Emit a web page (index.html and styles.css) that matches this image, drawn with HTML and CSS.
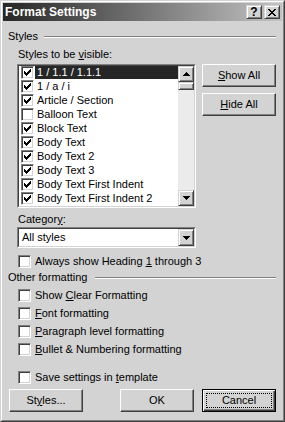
FILE: index.html
```html
<!DOCTYPE html>
<html>
<head>
<meta charset="utf-8">
<link rel="stylesheet" href="styles.css">
</head>
<body>
<div class="window">
 <div class="frame">
  <div class="titlebar">
   <span class="title">Format Settings</span>
   <div class="tbtns">
    <span class="tbtn help">?</span>
    <span class="tbtn"><svg width="8" height="7" viewBox="0 0 8 7" shape-rendering="crispEdges"><path d="M0 0h2v1h-2zM6 0h2v1h-2zM1 1h2v1h-2zM5 1h2v1h-2zM2 2h4v1h-4zM3 3h2v1h-2zM2 4h4v1h-4zM1 5h2v1h-2zM5 5h2v1h-2zM0 6h2v1h-2zM6 6h2v1h-2z" fill="#000"/></svg></span>
   </div>
  </div>
  <div class="client">
   <div class="group g1"><span>Styles</span><div class="rule"></div></div>
   <div class="indent">
    <div class="lbl">Styles to be <u>v</u>isible:</div>
    <div class="listrow">
     <div class="listbox sunken">
      <div class="sunken-in">
       <div class="items">
        <div class="item sel"><span class="cb"><svg class="ck" width="7" height="7" viewBox="0 0 7 7" shape-rendering="crispEdges"><path d="M0 2H1V3H2V4H3V3H4V2H5V1H6V0H7V3H6V4H5V5H4V6H3V7H2V6H1V5H0Z"/></svg></span><span class="txt">1 / 1.1 / 1.1.1</span></div>
        <div class="item"><span class="cb"><svg class="ck" width="7" height="7" viewBox="0 0 7 7" shape-rendering="crispEdges"><path d="M0 2H1V3H2V4H3V3H4V2H5V1H6V0H7V3H6V4H5V5H4V6H3V7H2V6H1V5H0Z"/></svg></span><span class="txt">1 / a / i</span></div>
        <div class="item"><span class="cb"><svg class="ck" width="7" height="7" viewBox="0 0 7 7" shape-rendering="crispEdges"><path d="M0 2H1V3H2V4H3V3H4V2H5V1H6V0H7V3H6V4H5V5H4V6H3V7H2V6H1V5H0Z"/></svg></span><span class="txt">Article / Section</span></div>
        <div class="item"><span class="cb"></span><span class="txt">Balloon Text</span></div>
        <div class="item"><span class="cb"><svg class="ck" width="7" height="7" viewBox="0 0 7 7" shape-rendering="crispEdges"><path d="M0 2H1V3H2V4H3V3H4V2H5V1H6V0H7V3H6V4H5V5H4V6H3V7H2V6H1V5H0Z"/></svg></span><span class="txt">Block Text</span></div>
        <div class="item"><span class="cb"><svg class="ck" width="7" height="7" viewBox="0 0 7 7" shape-rendering="crispEdges"><path d="M0 2H1V3H2V4H3V3H4V2H5V1H6V0H7V3H6V4H5V5H4V6H3V7H2V6H1V5H0Z"/></svg></span><span class="txt">Body Text</span></div>
        <div class="item"><span class="cb"><svg class="ck" width="7" height="7" viewBox="0 0 7 7" shape-rendering="crispEdges"><path d="M0 2H1V3H2V4H3V3H4V2H5V1H6V0H7V3H6V4H5V5H4V6H3V7H2V6H1V5H0Z"/></svg></span><span class="txt">Body Text 2</span></div>
        <div class="item"><span class="cb"><svg class="ck" width="7" height="7" viewBox="0 0 7 7" shape-rendering="crispEdges"><path d="M0 2H1V3H2V4H3V3H4V2H5V1H6V0H7V3H6V4H5V5H4V6H3V7H2V6H1V5H0Z"/></svg></span><span class="txt">Body Text 3</span></div>
        <div class="item"><span class="cb"><svg class="ck" width="7" height="7" viewBox="0 0 7 7" shape-rendering="crispEdges"><path d="M0 2H1V3H2V4H3V3H4V2H5V1H6V0H7V3H6V4H5V5H4V6H3V7H2V6H1V5H0Z"/></svg></span><span class="txt">Body Text First Indent</span></div>
        <div class="item"><span class="cb"><svg class="ck" width="7" height="7" viewBox="0 0 7 7" shape-rendering="crispEdges"><path d="M0 2H1V3H2V4H3V3H4V2H5V1H6V0H7V3H6V4H5V5H4V6H3V7H2V6H1V5H0Z"/></svg></span><span class="txt">Body Text First Indent 2</span></div>
       </div>
       <div class="vscroll">
        <div class="sbtn"><svg width="7" height="4" viewBox="0 0 7 4" shape-rendering="crispEdges"><path d="M3 0h1v1h1v1h1v1h1v1H0V3h1V2h1V1h1z"/></svg></div>
        <div class="thumb"></div>
        <div class="track"></div>
        <div class="sbtn"><svg width="7" height="4" viewBox="0 0 7 4" shape-rendering="crispEdges"><path d="M0 0h7v1H6v1H5v1H4v1H3V3H2V2H1V1H0z"/></svg></div>
       </div>
      </div>
     </div>
     <div class="side">
      <div class="btn"><span><u>S</u>how All</span></div>
      <div class="btn"><span><u>H</u>ide All</span></div>
     </div>
    </div>
    <div class="lbl cat">Categor<u>y</u>:</div>
    <div class="combo sunken">
     <div class="sunken-in">
      <span class="combo-text">All styles</span>
      <div class="sbtn cbtn"><svg width="7" height="4" viewBox="0 0 7 4" shape-rendering="crispEdges"><path d="M0 0h7v1H6v1H5v1H4v1H3V3H2V2H1V1H0z"/></svg></div>
     </div>
    </div>
    <div class="chk chk1"><span class="cb"></span><span>Always show Heading <u>1</u> through 3</span></div>
   </div>
   <div class="group g2"><span>Other formatting</span><div class="rule"></div></div>
   <div class="indent checks">
    <div class="chk"><span class="cb"></span><span>Show <u>C</u>lear Formatting</span></div>
    <div class="chk"><span class="cb"></span><span><u>F</u>ont formatting</span></div>
    <div class="chk"><span class="cb"></span><span><u>P</u>aragraph level formatting</span></div>
    <div class="chk"><span class="cb"></span><span><u>B</u>ullet &amp; Numbering formatting</span></div>
    <div class="chk save"><span class="cb"></span><span>Save settings in <u>t</u>emplate</span></div>
   </div>
   <div class="bottom">
    <div class="btn b-styles"><span>St<u>y</u>les...</span></div>
    <div class="btn b-ok"><span>OK</span></div>
    <div class="btn def b-cancel"><span class="focus">Cancel</span></div>
   </div>
  </div>
 </div>
</div>
</body>
</html>
```
FILE: styles.css
```css
html, body {
  margin: 0;
  padding: 0;
  background: #d3d3d3;
}
body {
  font-family: "Liberation Sans", Arial, sans-serif;
  font-size: 11px;
  color: #000;
}
u { text-decoration: underline; text-underline-offset: 1px; }

.window {
  width: 285px;
  height: 422px;
  box-sizing: border-box;
  border: 1px solid;
  border-color: #d3d3d3 #404040 #404040 #d3d3d3;
  background: #d3d3d3;
}
.frame {
  height: 100%;
  box-sizing: border-box;
  border: 1px solid;
  border-color: #fff #808080 #808080 #fff;
  padding: 1px;
  display: flex;
  flex-direction: column;
}
.titlebar {
  height: 18px;
  flex: none;
  background: linear-gradient(to right, #262626, #c3c3c3);
  display: flex;
  align-items: center;
  padding: 0 2px 0 2px;
}
.title {
  flex: 1;
  color: #fff;
  font-weight: bold;
  font-size: 12px;
  line-height: 18px;
}
.tbtns { display: flex; gap: 2px; }
.tbtn {
  width: 16px;
  height: 14px;
  box-sizing: border-box;
  border: 1px solid;
  border-color: #d3d3d3 #404040 #404040 #d3d3d3;
  box-shadow: inset 1px 1px #fff, inset -1px -1px #808080;
  background: #d3d3d3;
  display: flex;
  align-items: center;
  justify-content: center;
}
.help {
  font-weight: bold;
  font-size: 12px;
  line-height: 12px;
}

.client {
  flex: 1;
  padding: 0 6px 0 5px;
  display: flex;
  flex-direction: column;
}
.group {
  display: flex;
  align-items: center;
  height: 13px;
  line-height: 13px;
}
.group .rule {
  flex: 1;
  margin-left: 6px;
  border-top: 1px solid #808080;
  border-bottom: 1px solid #fff;
}
.g1 { margin-top: 9px; }
.g2 { margin-top: 3px; }
.g2 .rule { margin-left: 8px; }

.indent { margin-left: 9px; }
.lbl {
  margin-top: 5px;
  line-height: 13px;
  height: 13px;
  padding-left: 1px;
}
.listrow {
  display: flex;
  align-items: flex-start;
  margin-top: 3px;
}
.sunken {
  box-sizing: border-box;
  border: 1px solid;
  border-color: #808080 #fff #fff #808080;
}
.sunken-in {
  box-sizing: border-box;
  height: 100%;
  border: 1px solid;
  border-color: #404040 #d3d3d3 #d3d3d3 #404040;
  background: #fff;
  display: flex;
}
.listbox { width: 179px; height: 144px; }
.items { flex: 1; overflow: hidden; }
.item {
  height: 14px;
  display: flex;
  align-items: flex-start;
}
.item .cb { margin-left: 2px; }
.item .txt {
  margin-left: 1px;
  padding-left: 2px;
  height: 13px;
  line-height: 13px;
  white-space: nowrap;
}
.item.sel .txt {
  flex: 1;
  background: #262626;
  color: #fff;
}

.cb {
  flex: none;
  width: 13px;
  height: 13px;
  box-sizing: border-box;
  border: 1px solid;
  border-color: #808080 #fff #fff #808080;
  box-shadow: inset 1px 1px #404040, inset -1px -1px #d3d3d3;
  background: #fff;
  padding: 2px;
  display: flex;
}
.ck { display: block; fill: #000; }

.vscroll {
  width: 16px;
  flex: none;
  display: flex;
  flex-direction: column;
  background: #ebebeb;
}
.sbtn, .thumb {
  flex: none;
  width: 16px;
  box-sizing: border-box;
  border: 1px solid;
  border-color: #d3d3d3 #404040 #404040 #d3d3d3;
  box-shadow: inset 1px 1px #fff, inset -1px -1px #808080;
  background: #d3d3d3;
}
.sbtn {
  height: 16px;
  display: flex;
  align-items: center;
  justify-content: center;
}
.sbtn svg { fill: #000; display: block; }
.thumb { height: 8px; }
.track { flex: 1; }

.side {
  margin-left: 6px;
  display: flex;
  flex-direction: column;
  gap: 6px;
}
.btn {
  width: 74px;
  height: 23px;
  box-sizing: border-box;
  border: 1px solid;
  border-color: #fff #404040 #404040 #fff;
  box-shadow: inset -1px -1px #808080;
  background: #d3d3d3;
  display: flex;
  align-items: center;
  justify-content: center;
  line-height: 13px;
}

.cat { margin-top: 5px; }
.combo {
  margin-top: 1px;
  width: 179px;
  height: 21px;
}
.combo-text {
  flex: 1;
  padding-left: 3px;
  line-height: 17px;
}
.cbtn { height: 17px; }

.chk {
  display: flex;
  align-items: flex-start;
  height: 13px;
  line-height: 13px;
  white-space: nowrap;
}
.chk .cb { margin-left: 1px; margin-right: 4px; }
.chk1 { margin-top: 7px; }
.checks .chk { margin-top: 5px; }
.checks .save { margin-top: 15px; }

.bottom {
  margin-top: 5px;
  display: flex;
}
.b-styles { margin-left: 1px; }
.b-ok { margin-left: 37px; }
.b-cancel { margin-left: 8px; }
.btn.def {
  border: 1px solid #000;
  box-shadow: inset 1px 1px #fff, inset -1px -1px #404040, inset -2px -2px #808080;
  padding: 3px;
  align-items: stretch;
}
.focus {
  flex: 1;
  border: 1px dotted #000;
  display: flex;
  align-items: center;
  justify-content: center;
}
```
